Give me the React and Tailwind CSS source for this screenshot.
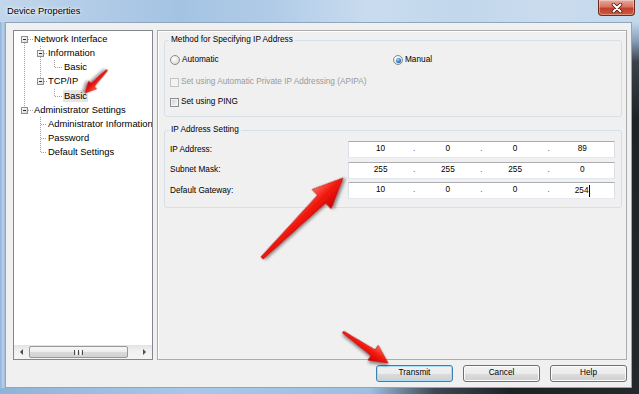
import React from "react";

const TREE = [
  { t: "Network Interface", cls: "pl-[20px]" },
  { t: "Information", cls: "pl-[34px]" },
  { t: "Basic", cls: "pl-[50px]" },
  { t: "TCP/IP", cls: "pl-[34px]" },
  { t: "Basic", cls: "pl-[49px]", sel: true },
  { t: "Administrator Settings", cls: "pl-[20px]" },
  { t: "Administrator Information", cls: "pl-[34px]" },
  { t: "Password", cls: "pl-[34px]" },
  { t: "Default Settings", cls: "pl-[34px]" },
];

const ROW = 14.125;
const cy = (i) => Math.round(1 + ROW * i + ROW / 2);
const top = (i) => Math.round(1 + ROW * i);

function Box({ x, c }) {
  return (
    <g>
      <rect x={x + 0.5} y={c - 2.5} width="6" height="6" fill="url(#boxg)" stroke="#8f8f8f" strokeWidth="1" />
      <line x1={x + 2} x2={x + 5} y1={c + 0.5} y2={c + 0.5} stroke="#2b2b2b" strokeWidth="1" />
    </g>
  );
}

function TreeLines() {
  const d = { stroke: "#a0a0a0", strokeWidth: 1, strokeDasharray: "1 1" };
  const h = (x1, x2, i) => <line x1={x1} x2={x2} y1={cy(i) + 0.5} y2={cy(i) + 0.5} {...d} />;
  const v = (x, y1, y2) => <line x1={x + 0.5} x2={x + 0.5} y1={y1} y2={y2} {...d} />;
  return (
    <svg className="absolute left-0 top-0 pointer-events-none" width="140" height="160">
      <defs>
        <linearGradient id="boxg" x1="0" y1="0" x2="1" y2="1">
          <stop offset="0" stopColor="#ffffff" />
          <stop offset="1" stopColor="#d6d6d6" />
        </linearGradient>
      </defs>
      {v(10, cy(0) + 4, cy(5) - 3)}
      {h(14, 19, 0)}
      {h(14, 19, 5)}
      {v(26, top(1), cy(1) - 3)}
      {v(26, cy(1) + 4, cy(3) - 3)}
      {h(30, 33, 1)}
      {h(30, 33, 3)}
      {v(40, top(2), cy(2))}
      {h(41, 48, 2)}
      {v(40, top(4), cy(4))}
      {h(41, 48, 4)}
      {v(26, top(6), cy(8) + 1)}
      {h(27, 33, 6)}
      {h(27, 33, 7)}
      {h(27, 33, 8)}
      <Box x={7} c={cy(0)} />
      <Box x={7} c={cy(5)} />
      <Box x={23} c={cy(1)} />
      <Box x={23} c={cy(3)} />
    </svg>
  );
}

function Radio({ checked }) {
  return (
    <span className="flex w-[10px] h-[10px] shrink-0 items-center justify-center rounded-full border border-[#8a8a8a] bg-[radial-gradient(circle_at_35%_35%,#ffffff_0%,#e4e4e4_60%,#cfcfcf_100%)]">
      {checked && (
        <span className="w-[5px] h-[5px] rounded-full bg-[radial-gradient(circle_at_40%_35%,#9fdcff_0%,#2a78c8_55%,#0f3f86_100%)]" />
      )}
    </span>
  );
}

function Check({ disabled }) {
  return disabled ? (
    <span className="w-[9px] h-[9px] shrink-0 border border-[#c4c4c4] bg-[#f3f3f3]" />
  ) : (
    <span className="w-[9px] h-[9px] shrink-0 border border-[#8e8f8f] shadow-[inset_0_0_0_1px_#f4f4f4] bg-[linear-gradient(135deg,#c9ccd1_0%,#eeeeee_70%,#fafafa_100%)]" />
  );
}

function IpField({ vals, caret }) {
  const seg = (v, last) => (
    <span className="flex-1 text-center">
      {v}
      {last && caret && <span className="inline-block w-[1px] h-[12px] bg-black align-middle ml-[0.5px]" />}
    </span>
  );
  const dot = <span className="w-[4px] text-center text-[#555566]">.</span>;
  return (
    <div className="w-[267px] h-[17px] flex items-center bg-white border border-t-[#abadb3] border-l-[#dbdfe6] border-r-[#dbdfe6] border-b-[#e3e9ef] text-[8.25px] leading-none text-black">
      {seg(vals[0])}
      {dot}
      {seg(vals[1])}
      {dot}
      {seg(vals[2])}
      {dot}
      {seg(vals[3], true)}
    </div>
  );
}

function Btn({ children, def }) {
  return (
    <div
      className={
        def
          ? "w-[77px] h-[17px] flex items-center justify-center rounded-[3px] border border-[#3c7fb1] shadow-[inset_0_0_0_1px_#a9dcf7] bg-[linear-gradient(180deg,#f2f2f2_0%,#ebebeb_50%,#dddddd_50%,#cfcfcf_100%)] text-[8.25px] text-black"
          : "w-[77px] h-[17px] flex items-center justify-center rounded-[3px] border border-[#707070] shadow-[inset_0_0_0_1px_#fcfcfc] bg-[linear-gradient(180deg,#f2f2f2_0%,#ebebeb_50%,#dddddd_50%,#cfcfcf_100%)] text-[8.25px] text-black"
      }
    >
      {children}
    </div>
  );
}

function Arrow({ x, y, tx, ty, h, hw, s, t }) {
  const dx = tx - x;
  const dy = ty - y;
  const L = Math.sqrt(dx * dx + dy * dy);
  const a = (Math.atan2(dy, dx) * 180) / Math.PI;
  const pts = [
    [0, -t],
    [L - h, -s],
    [L - h, -hw],
    [L, 0],
    [L - h, hw],
    [L - h, s],
    [0, t],
  ]
    .map((p) => p.join(","))
    .join(" ");
  return (
    <polygon
      points={pts}
      transform={`translate(${x} ${y}) rotate(${a})`}
      fill="url(#arrg)"
      stroke="#b30000"
      strokeWidth="0.6"
      filter="url(#arrsh)"
    />
  );
}

export default function App() {
  return (
    <div className="relative w-[639px] h-[394px] overflow-hidden font-['Liberation_Sans',Arial,sans-serif] bg-[linear-gradient(180deg,#c6d9ec_0px,#bcd3ea_24px,#8aa2ba_40px,#3a424b_62px,#1d2226_120px,#23282d_100%)]">
      <div className="flex flex-col w-full h-full">
        {/* Title bar */}
        <div className="h-[22px] flex items-start bg-[linear-gradient(90deg,#c3d7eb_0%,#b4cde8_12%,#a4c3e3_28%,#b0cbe7_42%,#c9dcef_58%,#c2d7ec_72%,#cadcee_86%,#c4d8ec_100%)]">
          <div className="pl-[7px] pt-[5px] text-[9.3px] leading-[12px] text-black [text-shadow:0_0_5px_#ffffff,0_0_3px_#ffffff]">
            Device Properties
          </div>
          <div className="flex-1" />
          <div className="mr-[4px] w-[37px] h-[16px] flex items-center justify-center rounded-b-[4px] border border-t-0 border-[#6e2a20] bg-[linear-gradient(180deg,#e8a899_0%,#d77563_45%,#c2402b_55%,#cf5a3f_100%)] shadow-[inset_0_0_0_1px_rgba(255,255,255,0.35)]">
            <svg width="12" height="10" viewBox="0 0 12 10">
              <path d="M2.5 1.5 L9.5 8.5 M9.5 1.5 L2.5 8.5" stroke="#4a1a12" strokeWidth="3.6" strokeLinecap="round" />
              <path d="M2.5 1.5 L9.5 8.5 M9.5 1.5 L2.5 8.5" stroke="#ffffff" strokeWidth="2" strokeLinecap="round" />
            </svg>
          </div>
        </div>

        <div className="flex h-[366px]">
          {/* left frame */}
          <div className="w-[5px] bg-[linear-gradient(90deg,#8fb3d8_0%,#b7d1eb_60%,#9fbcd9_100%)]" />
          {/* client */}
          <div className="w-[627px] border border-[#8fa6be] bg-[#f0f0f0] flex flex-col pt-[7px] pl-[7px] pr-[4px] pb-[5px]">
            <div className="flex h-[330px] gap-[4px]">
              {/* Tree panel */}
              <div className="w-[140px] h-full border border-[#828790] bg-white flex flex-col">
                <div className="relative flex-1 overflow-hidden pt-[1px]">
                  <TreeLines />
                  {TREE.map((r, i) => (
                    <div key={i} className={`h-[14.125px] flex items-center whitespace-nowrap ${r.cls}`}>
                      <span
                        className={
                          r.sel
                            ? "text-[9.4px] leading-[12px] text-black bg-[#e6e6e6] px-[1px]"
                            : "text-[9.4px] leading-[12px] text-black"
                        }
                      >
                        {r.t}
                      </span>
                    </div>
                  ))}
                </div>
                {/* horizontal scrollbar */}
                <div className="h-[14px] flex items-center bg-[linear-gradient(180deg,#e3e3e3_0%,#f1f1f1_40%,#f4f4f4_100%)]">
                  <div className="w-[15px] h-full flex items-center justify-center">
                    <svg width="6" height="8" viewBox="0 0 6 8">
                      <polygon points="1,4 4,1 4,7" fill="#4d4d4d" />
                    </svg>
                  </div>
                  <div className="w-[99px] h-[12px] rounded-[2px] border border-[#979797] bg-[linear-gradient(180deg,#f7f7f7_0%,#ececec_50%,#dadada_51%,#d2d2d2_100%)] flex items-center justify-center gap-[1px]">
                    <span className="w-[1px] h-[5px] bg-[#4d4d4d]" />
                    <span className="w-[1px] h-[5px] bg-[#ffffff]" />
                    <span className="w-[1px] h-[5px] bg-[#4d4d4d]" />
                    <span className="w-[1px] h-[5px] bg-[#ffffff]" />
                    <span className="w-[1px] h-[5px] bg-[#4d4d4d]" />
                  </div>
                  <div className="flex-1" />
                  <div className="w-[17px] h-full flex items-center justify-center">
                    <svg width="6" height="8" viewBox="0 0 6 8">
                      <polygon points="2,1 5,4 2,7" fill="#4d4d4d" />
                    </svg>
                  </div>
                </div>
              </div>

              {/* Right panel */}
              <div className="w-[470px] h-full border border-[#acacac] shadow-[inset_1px_1px_0_#ffffff] pt-[4px] pl-[6px] pr-[4px] text-[8.25px] leading-[10px] text-black">
                <fieldset className="h-[82px] border border-[#d5dfe5] rounded-[3px]">
                  <legend className="ml-[4px] px-[2px] text-[8.25px] leading-[10px]">Method for Specifying IP Address</legend>
                  <div className="px-[5px] pt-[5px]">
                    <div className="h-[20px] flex items-center">
                      <div className="w-[223px] flex items-center gap-[2px]">
                        <Radio />
                        <span>Automatic</span>
                      </div>
                      <div className="flex items-center gap-[2px]">
                        <Radio checked />
                        <span>Manual</span>
                      </div>
                    </div>
                    <div className="h-[20px] mt-[2px] flex items-center gap-[2px]">
                      <Check disabled />
                      <span className="text-[#9a9a9a]">Set using Automatic Private IP Addressing (APIPA)</span>
                    </div>
                    <div className="h-[20px] flex items-center gap-[2px]">
                      <Check />
                      <span>Set using PING</span>
                    </div>
                  </div>
                </fieldset>

                <fieldset className="mt-[8px] h-[83px] border border-[#d5dfe5] rounded-[3px]">
                  <legend className="ml-[4px] px-[2px] text-[8.25px] leading-[10px]">IP Address Setting</legend>
                  <div className="pl-[5px] pr-[6px] pt-[6px] flex flex-col gap-[3.5px]">
                    <div className="h-[17px] flex items-center justify-between">
                      <span>IP Address:</span>
                      <IpField vals={["10", "0", "0", "89"]} />
                    </div>
                    <div className="h-[17px] flex items-center justify-between">
                      <span>Subnet Mask:</span>
                      <IpField vals={["255", "255", "255", "0"]} />
                    </div>
                    <div className="h-[17px] flex items-center justify-between">
                      <span>Default Gateway:</span>
                      <IpField vals={["10", "0", "0", "254"]} caret />
                    </div>
                  </div>
                </fieldset>
              </div>
            </div>

            {/* Buttons */}
            <div className="mt-[5px] h-[17px] flex justify-end gap-[10px]">
              <Btn def>Transmit</Btn>
              <Btn>Cancel</Btn>
              <Btn>Help</Btn>
            </div>
          </div>
          {/* right frame: transparent glass showing backdrop */}
          <div className="w-[7px]" />
        </div>

        {/* bottom frame */}
        <div className="h-[6px] bg-[linear-gradient(90deg,#8fb3d8_0%,#a9c8e7_30%,#9dbfe0_58%,#3e4853_68%,#1d2226_80%,#23282d_100%)]" />
      </div>

      {/* Red annotation arrows */}
      <svg className="absolute left-0 top-0 pointer-events-none" width="639" height="394">
        <defs>
          <linearGradient id="arrg" x1="0" y1="0" x2="0" y2="1">
            <stop offset="0" stopColor="#ff6a5a" />
            <stop offset="0.45" stopColor="#f41a10" />
            <stop offset="1" stopColor="#c80000" />
          </linearGradient>
          <filter id="arrsh" x="-30%" y="-30%" width="160%" height="160%">
            <feDropShadow dx="1.5" dy="2" stdDeviation="1.4" floodColor="#000000" floodOpacity="0.45" />
          </filter>
        </defs>
        <Arrow x={107} y={70} tx={85} ty={93} h={11} hw={5.5} s={2.2} t={0.8} />
        <Arrow x={262} y={258} tx={343} ty={178} h={30} hw={13.5} s={5.5} t={1.4} />
        <Arrow x={343} y={332} tx={388} ty={363} h={18} hw={9} s={3.5} t={1} />
      </svg>
    </div>
  );
}
